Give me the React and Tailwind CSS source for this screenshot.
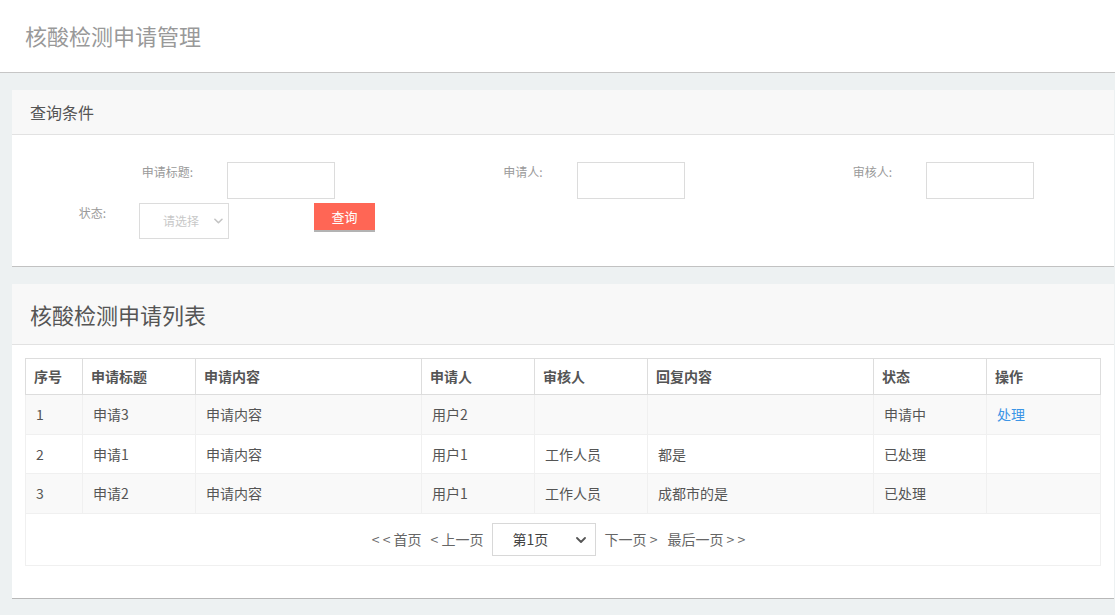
import React from 'react';

const font = { fontFamily: '"Noto Sans CJK SC", "Noto Sans", sans-serif' };

const rows = [
    { id: 1, title: '申请3', content: '申请内容', user: '用户2', auditor: '', reply: '', status: '申请中', action: '处理' },
    { id: 2, title: '申请1', content: '申请内容', user: '用户1', auditor: '工作人员', reply: '都是', status: '已处理', action: '' },
    { id: 3, title: '申请2', content: '申请内容', user: '用户1', auditor: '工作人员', reply: '成都市的是', status: '已处理', action: '' },
];

const columns = [
    { label: '序号', width: 57 },
    { label: '申请标题', width: 113 },
    { label: '申请内容', width: 226 },
    { label: '申请人', width: 113 },
    { label: '审核人', width: 113 },
    { label: '回复内容', width: 226 },
    { label: '状态', width: 113 },
    { label: '操作', width: 114 },
];

const Chevron = ({ className }) => (
    <svg className={className} viewBox="0 0 10 6" fill="none" stroke="currentColor" strokeWidth="1.8" strokeLinecap="round" strokeLinejoin="round">
        <path d="M1 1l4 4 4-4" />
    </svg>
);

const Field = ({ label }) => (
    <div className="flex w-[349.5px] shrink-0">
        <div className="w-[181px] pt-[1px] text-right text-[12px] text-[#9a9a9a]">{label}</div>
        <div className="ml-[34px] h-[37px] w-[108px] border border-[#dcdcdc] bg-white" />
    </div>
);

const App = () => {
    return (
        <div className="min-h-[615px] bg-[#edf1f2]" style={font}>
            {/* page header */}
            <div className="flex h-[73px] items-center border-b border-[#c6c6c6] bg-white pl-[25px]">
                <h1 className="-mt-[1px] text-[22px] text-[#999]">核酸检测申请管理</h1>
            </div>

            <div className="pl-[12px] pr-[1px] pt-[17px]">
                {/* query panel */}
                <div className="border-b border-[#c2c2c2] bg-white">
                    <div className="flex h-[45px] items-center border-b border-[#e2e2e2] bg-[#f8f8f8] pl-[18px]">
                        <span className="text-[16px] text-[#555]">查询条件</span>
                    </div>
                    <div className="pb-[27px] pt-[27px]">
                        <div className="flex">
                            <Field label="申请标题:" />
                            <Field label="申请人:" />
                            <Field label="审核人:" />
                        </div>
                        <div className="mt-[4px] flex items-start">
                            <div className="w-[94px] pt-[1px] text-right text-[12px] text-[#9a9a9a]">状态:</div>
                            <div className="ml-[33px] flex h-[36px] w-[90px] items-center border border-[#dcdcdc] bg-white pl-[23px] pr-[5px]">
                                <span className="w-[52px] overflow-hidden whitespace-nowrap text-[12px] text-[#c8c8c8]">请选择</span>
                                <Chevron className="ml-auto h-[6px] w-[9px] text-[#c4c4c4]" />
                            </div>
                            <button className="ml-[85px] h-[29px] w-[61px] border-b-2 border-[#b3b3b3] bg-[#ff6655] text-[13px] text-white">
                                查询
                            </button>
                        </div>
                    </div>
                </div>

                {/* list panel */}
                <div className="mt-[17px] border-b border-[#b8b8b8] bg-white">
                    <div className="flex h-[61px] items-center border-b border-[#e2e2e2] bg-[#f8f8f8] pl-[18px]">
                        <h2 className="text-[22px] text-[#555]">核酸检测申请列表</h2>
                    </div>
                    <div className="px-[13px] pb-[32px] pt-[13px]">
                        <table className="w-[1075px] table-fixed border-collapse text-[14px] text-[#555]">
                            <colgroup>
                                {columns.map((c) => (
                                    <col key={c.label} style={{ width: c.width }} />
                                ))}
                            </colgroup>
                            <thead>
                                <tr className="h-[36px]">
                                    {columns.map((c) => (
                                        <th key={c.label} className="border border-[#dddddd] pl-[8px] text-left font-bold text-[#555]">
                                            {c.label}
                                        </th>
                                    ))}
                                </tr>
                            </thead>
                            <tbody>
                                {rows.map((r, i) => (
                                    <tr key={r.id} className={i % 2 === 0 ? 'h-[40px] bg-[#f9f9f9]' : 'h-[39px] bg-white'}>
                                        <td className="border border-[#f0f0f0] pl-[10px]">{r.id}</td>
                                        <td className="border border-[#f0f0f0] pl-[10px]">{r.title}</td>
                                        <td className="border border-[#f0f0f0] pl-[10px]">{r.content}</td>
                                        <td className="border border-[#f0f0f0] pl-[10px]">{r.user}</td>
                                        <td className="border border-[#f0f0f0] pl-[10px]">{r.auditor}</td>
                                        <td className="border border-[#f0f0f0] pl-[10px]">{r.reply}</td>
                                        <td className="border border-[#f0f0f0] pl-[10px]">{r.status}</td>
                                        <td className="border border-[#f0f0f0] pl-[10px]">
                                            {r.action && <a className="cursor-pointer text-[#3c95e6]">{r.action}</a>}
                                        </td>
                                    </tr>
                                ))}
                                <tr className="h-[52px] bg-white">
                                    <td colSpan={8} className="border border-[#f0f0f0]">
                                        <div className="flex items-center justify-center pr-[9px] text-[14px] text-[#666]">
                                            <span className="whitespace-pre">{'< < 首页'}</span>
                                            <span className="ml-[9px] whitespace-pre">{'< 上一页'}</span>
                                            <div className="ml-[8px] flex h-[33px] w-[104px] items-center border border-[#d8d8d8] pl-[20px] pr-[9px] text-[#444]">
                                                <span>第1页</span>
                                                <Chevron className="ml-auto h-[6px] w-[10px] text-[#555]" />
                                            </div>
                                            <span className="ml-[9px] whitespace-pre">{'下一页 >'}</span>
                                            <span className="ml-[10px] whitespace-pre">{'最后一页 > >'}</span>
                                        </div>
                                    </td>
                                </tr>
                            </tbody>
                        </table>
                    </div>
                </div>
            </div>
        </div>
    );
};

export default App;
